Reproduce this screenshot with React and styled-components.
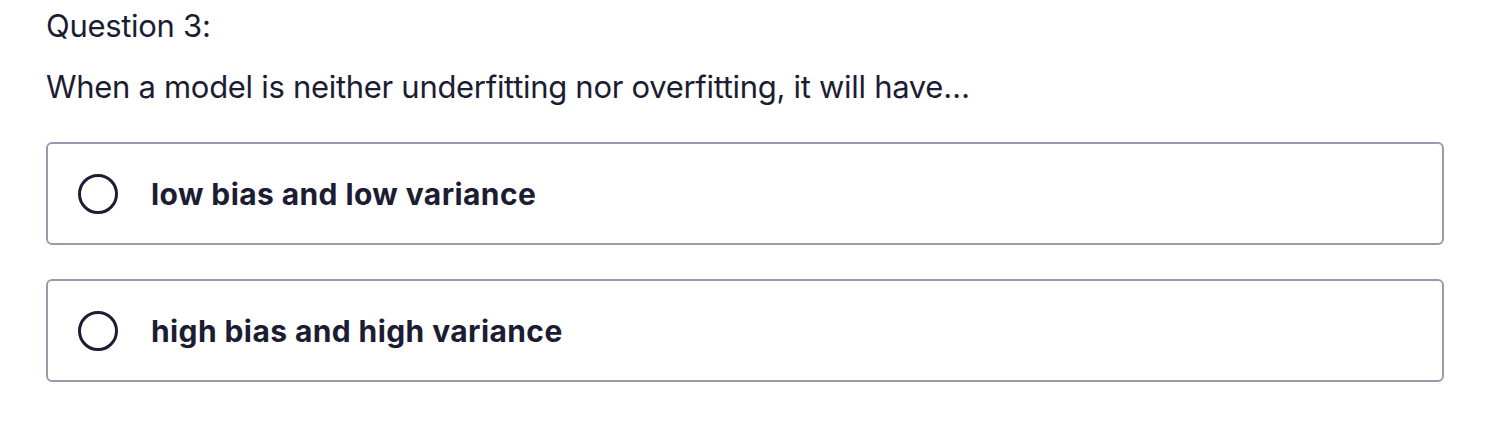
import styled, { createGlobalStyle } from "styled-components";

const Global = createGlobalStyle`
  body {
    margin: 0;
    background: #fff;
    font-family: Inter, "Liberation Sans", sans-serif;
    color: #1c1d33;
  }
`;

const options = ["low bias and low variance", "high bias and high variance"];

const App = () => {
  return (
    <>
      <Global />
      <Container>
        <Label>Question 3:</Label>
        <Prompt>When a model is neither underfitting nor overfitting, it will have…</Prompt>
        <List>
          {options.map((text) => (
            <Option key={text}>
              <Radio />
              <OptionText>{text}</OptionText>
            </Option>
          ))}
        </List>
      </Container>
    </>
  );
};
export default App;

const Container = styled.div`
  padding: 6px 60px 0 46px;
`;
const Label = styled.div`
  font-size: 31px;
  line-height: 40px;
  font-weight: 400;
  letter-spacing: -0.3px;
`;
const Prompt = styled.div`
  margin-top: 21px;
  font-size: 31px;
  line-height: 40px;
  font-weight: 400;
  letter-spacing: -0.3px;
`;
const List = styled.div`
  margin-top: 35px;
  display: flex;
  flex-direction: column;
  gap: 34px;
`;
const Option = styled.div`
  display: flex;
  align-items: center;
  height: 103px;
  width: 1398px;
  box-sizing: border-box;
  border: 2px solid #9a9aad;
  border-radius: 6px;
  padding-left: 30px;
`;
const Radio = styled.span`
  width: 40px;
  height: 40px;
  box-sizing: border-box;
  border: 3px solid #1c1d33;
  border-radius: 50%;
  flex-shrink: 0;
`;
const OptionText = styled.span`
  margin-left: 33px;
  font-size: 30px;
  font-weight: 700;
  letter-spacing: 0.4px;
`;
